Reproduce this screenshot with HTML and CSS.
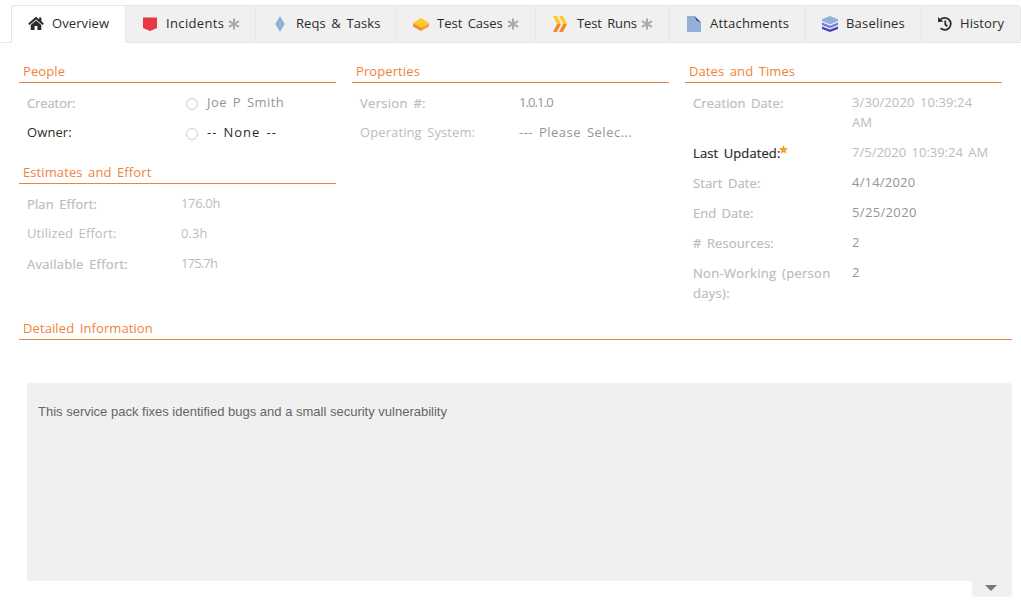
FILE: index.html
```html
<!DOCTYPE html>
<html lang="en">
<head>
<meta charset="utf-8">
<title>Release Details</title>
<link rel="stylesheet" href="styles.css">
</head>
<body>
<nav class="tabs">
  <a class="tab active t-overview"><svg class="icon" viewBox="0 0 16 16"><path fill="#2b2b2b" d="M8 .7 0.2 7.4 1.5 8.9 8 3.4 14.5 8.9 15.8 7.4 13.4 5.3V1.5H11.1V3.4zM8 4.6 2.7 9V14H6.6V10H9.4V14H13.3V9z"/></svg><span>Overview</span></a>
  <a class="tab t-incidents"><svg class="icon" viewBox="0 0 16 16"><path fill="#e63946" d="M1 1.5H15V12L8 15 1 12z"/></svg><span>Incidents</span><svg class="ast" viewBox="0 0 12 12"><path d="M6 .5V11.5M1 3.2 11 8.8M11 3.2 1 8.8"/></svg></a>
  <a class="tab t-reqs"><svg class="icon" viewBox="0 0 16 16"><path fill="#92b0d8" d="M8 0 12.7 8 8 16 3.3 8z"/></svg><span>Reqs &amp; Tasks</span></a>
  <a class="tab t-cases"><svg class="icon" viewBox="0 0 16 16"><path fill="#ffca28" d="M8 2 16 7 8 11.5 0 7z"/><path fill="#f58634" d="M0 7 8 11.5V15L0 10.5z"/><path fill="#f5a12e" d="M16 7 8 11.5V15L16 10.5z"/></svg><span>Test Cases</span><svg class="ast" viewBox="0 0 12 12"><path d="M6 .5V11.5M1 3.2 11 8.8M11 3.2 1 8.8"/></svg></a>
  <a class="tab t-runs"><svg class="icon" viewBox="0 0 16 16"><path fill="#ffca28" d="M1 0H5L9 8H5zM7 0H11L15 8H11z"/><path fill="#f58634" d="M5 8H9L5 16H1zM11 8H15L11 16H7z"/></svg><span>Test Runs</span><svg class="ast" viewBox="0 0 12 12"><path d="M6 .5V11.5M1 3.2 11 8.8M11 3.2 1 8.8"/></svg></a>
  <a class="tab t-attach"><svg class="icon" viewBox="0 0 16 16"><path fill="#92b0d8" d="M1 0H8.5L15 6.2V16H1z"/><path fill="#4a44b8" d="M8.5 0 15 6.2 10.8 5z"/></svg><span>Attachments</span></a>
  <a class="tab t-base"><svg class="icon" viewBox="0 0 16 16"><path fill="#4a44b8" d="M0 10.5 8 13.6 16 10.5V13L8 16 0 13z"/><path fill="#6f7ee0" d="M0 6.5 8 9.7 16 6.5V9L8 12.2 0 9z"/><path fill="#92b0d8" d="M8 0 16 3.3V4.9L8 8.4 0 4.9V3.3z"/></svg><span>Baselines</span></a>
  <a class="tab t-history"><svg class="icon" viewBox="0 0 16 16"><path d="M3 4.2A6 6 0 1 1 3.6 12.2M8.3 4.5V8.5L10.4 10.2" fill="none" stroke="#2b2b2b" stroke-width="1.8"/><path fill="#2b2b2b" d="M1 1 1.2 6.2 6.3 5.6z"/></svg><span>History</span></a>
</nav>

<main class="content">
  <div class="columns">
    <div class="column">
      <section class="group people">
        <h2>People</h2>
        <dl class="row"><dt class="muted medium l-creator">Creator:</dt><dd class="mid user"><i class="radio"></i><span class="l-joe">Joe P Smith</span></dd></dl>
        <dl class="row"><dt class="strong up">Owner:</dt><dd class="dark user"><i class="radio"></i><span class="l-none">-- None --</span></dd></dl>
      </section>
      <section class="group effort">
        <h2>Estimates and Effort</h2>
        <dl class="row"><dt class="muted medium">Plan Effort:</dt><dd class="muted l-plan">176.0h</dd></dl>
        <dl class="row"><dt class="muted up">Utilized Effort:</dt><dd class="muted">0.3h</dd></dl>
        <dl class="row"><dt class="muted medium l-avail">Available Effort:</dt><dd class="muted l-left">175.7h</dd></dl>
      </section>
    </div>
    <div class="column">
      <section class="group">
        <h2>Properties</h2>
        <dl class="row"><dt class="muted medium l-ver">Version #:</dt><dd class="mid l-number">1.0.1.0</dd></dl>
        <dl class="row"><dt class="muted up">Operating System:</dt><dd class="mid l-select">--- Please Selec...</dd></dl>
      </section>
    </div>
    <div class="column">
      <section class="group">
        <h2>Dates and Times</h2>
        <dl class="row"><dt class="muted medium">Creation Date:</dt><dd class="muted">3/30/2020 10:39:24<br>AM</dd></dl>
        <dl class="row"><dt class="strong medium">Last Updated:<svg class="star" viewBox="0 0 10 10"><path fill="#f5a12e" d="M5 0 6.5 3.2 10 3.6 7.4 6 8.1 9.6 5 7.8 1.9 9.6 2.6 6 0 3.6 3.5 3.2z"/></svg></dt><dd class="muted l-updated">7/5/2020 10:39:24 AM</dd></dl>
        <dl class="row"><dt class="muted medium">Start Date:</dt><dd class="mid l-start">4/14/2020</dd></dl>
        <dl class="row"><dt class="muted medium l-end-label">End Date:</dt><dd class="mid l-end">5/25/2020</dd></dl>
        <dl class="row"><dt class="muted medium"># Resources:</dt><dd class="mid">2</dd></dl>
        <dl class="row"><dt class="muted medium l-nonwork">Non-Working (person<br>days):</dt><dd class="mid">2</dd></dl>
      </section>
    </div>
  </div>
  <section class="details">
    <h2>Detailed Information</h2>
    <div class="description">This service pack fixes identified bugs and a small security vulnerability</div>
    <button class="expand" aria-label="Expand"></button>
  </section>
</main>
</body>
</html>
```
FILE: styles.css
```css
* { box-sizing: border-box; }
body {
  margin: 0;
  width: 1021px;
  height: 608px;
  overflow: hidden;
  background: #fff;
  color: #2b2b2b;
  font: 13px/20px "Open Sans", "Noto Sans", sans-serif;
  word-spacing: 2px;
  letter-spacing: .1px;
}
.tabs {
  display: flex;
  height: 43px;
  padding: 5px 0 0 11px;
  background: linear-gradient(#e6e6e6, #e6e6e6) 1px 42px / 1020px 1px no-repeat;
}
.tab {
  display: flex;
  align-items: center;
  flex: none;
  height: 38px;
  padding: 0 0 1px 16px;
  border: 1px solid #e6e6e6;
  border-right-width: 0;
  background: #f0f0f0;
  white-space: nowrap;
}
.tab.active { background: #fff; border-bottom-color: #fff; border-radius: 4px 0 0 0; }
.tab .icon { width: 16px; height: 16px; margin-right: 8px; flex: none; }
.tab span { margin-bottom: 2px; }
.ast { width: 12px; height: 12px; margin-left: 4px; fill: none; stroke: #a8a8a8; stroke-width: 2; }
.t-overview { width: 114px; }
.t-incidents { width: 130px; letter-spacing: .35px; }
.t-reqs { width: 141px; }
.t-cases { width: 139px; letter-spacing: 0; }
.t-runs { width: 134px; letter-spacing: -.1px; }
.t-runs .icon { margin-right: 9px; }
.t-attach { width: 136px; letter-spacing: .2px; }
.t-base { width: 116px; letter-spacing: .2px; }
.t-history { width: 100px; padding-left: 15px; border-right-width: 1px; border-radius: 0 4px 4px 0; }
.t-history .icon { margin-right: 7px; }
.content { padding: 18px 9px 0 19px; }
.columns { display: grid; grid-template-columns: repeat(3, 317px); column-gap: 16px; height: 257px; }
h2 {
  margin: 0;
  height: 22px;
  padding-left: 4px;
  border-bottom: 1px solid #f0833a;
  color: #f0833a;
  font-size: 13px;
  font-weight: 400;
  line-height: 20px;
}
.people { height: 101px; }
.row { display: flex; margin: 9px 8px 0; }
.row + .row { margin-top: 10px; }
dt { width: 159px; flex: none; padding-top: 1px; margin-bottom: -1px; }
dt.up { padding-top: 0; margin-bottom: 0; }
dd { margin: 0; white-space: nowrap; }
.effort dt { width: 154px; }
.muted { color: #bcbcbc; }
.mid { color: #959595; }
.strong, .dark { color: #2b2b2b; }
.medium { font-weight: 500; -webkit-text-stroke: .2px currentColor; }
.user { display: flex; }
.radio { width: 12px; height: 12px; margin: 6px 9px 0 0; border: 1px solid #ccc; border-radius: 50%; }
.star { width: 9px; height: 9px; vertical-align: 4px; margin: -4px 0 0 -1px; }
.l-creator { letter-spacing: -.1px; }
.l-joe { letter-spacing: .45px; }
.l-none { letter-spacing: .95px; }
.l-plan { letter-spacing: -.35px; }
.l-avail { letter-spacing: .25px; }
.l-left { letter-spacing: -.85px; }
.l-ver { letter-spacing: .3px; }
.l-number { letter-spacing: -.9px; }
.l-select { letter-spacing: .5px; }
.l-updated { letter-spacing: 0; }
.l-start { letter-spacing: .2px; }
.l-end-label { letter-spacing: 0; }
.l-end { letter-spacing: .35px; }
.l-nonwork { letter-spacing: .3px; }
.details { display: flex; flex-direction: column; }
.description {
  height: 198px;
  margin: 43px 0 0 8px;
  padding: 19px 11px;
  border-radius: 3px 3px 0 3px;
  background: #f0f0f0;
  color: #666;
  font: 13px/20px "Liberation Sans", Arial, sans-serif;
  word-spacing: 0;
  letter-spacing: 0;
}
.expand {
  align-self: flex-end;
  display: flex;
  justify-content: center;
  align-items: flex-start;
  width: 40px;
  height: 16px;
  padding: 4px 2px 0 0;
  border: 0;
  border-radius: 0 0 4px 4px;
  background: #f0f0f0;
}
.expand::before { content: ""; border: 6px solid transparent; border-top-color: #777; border-bottom: 0; }
```
